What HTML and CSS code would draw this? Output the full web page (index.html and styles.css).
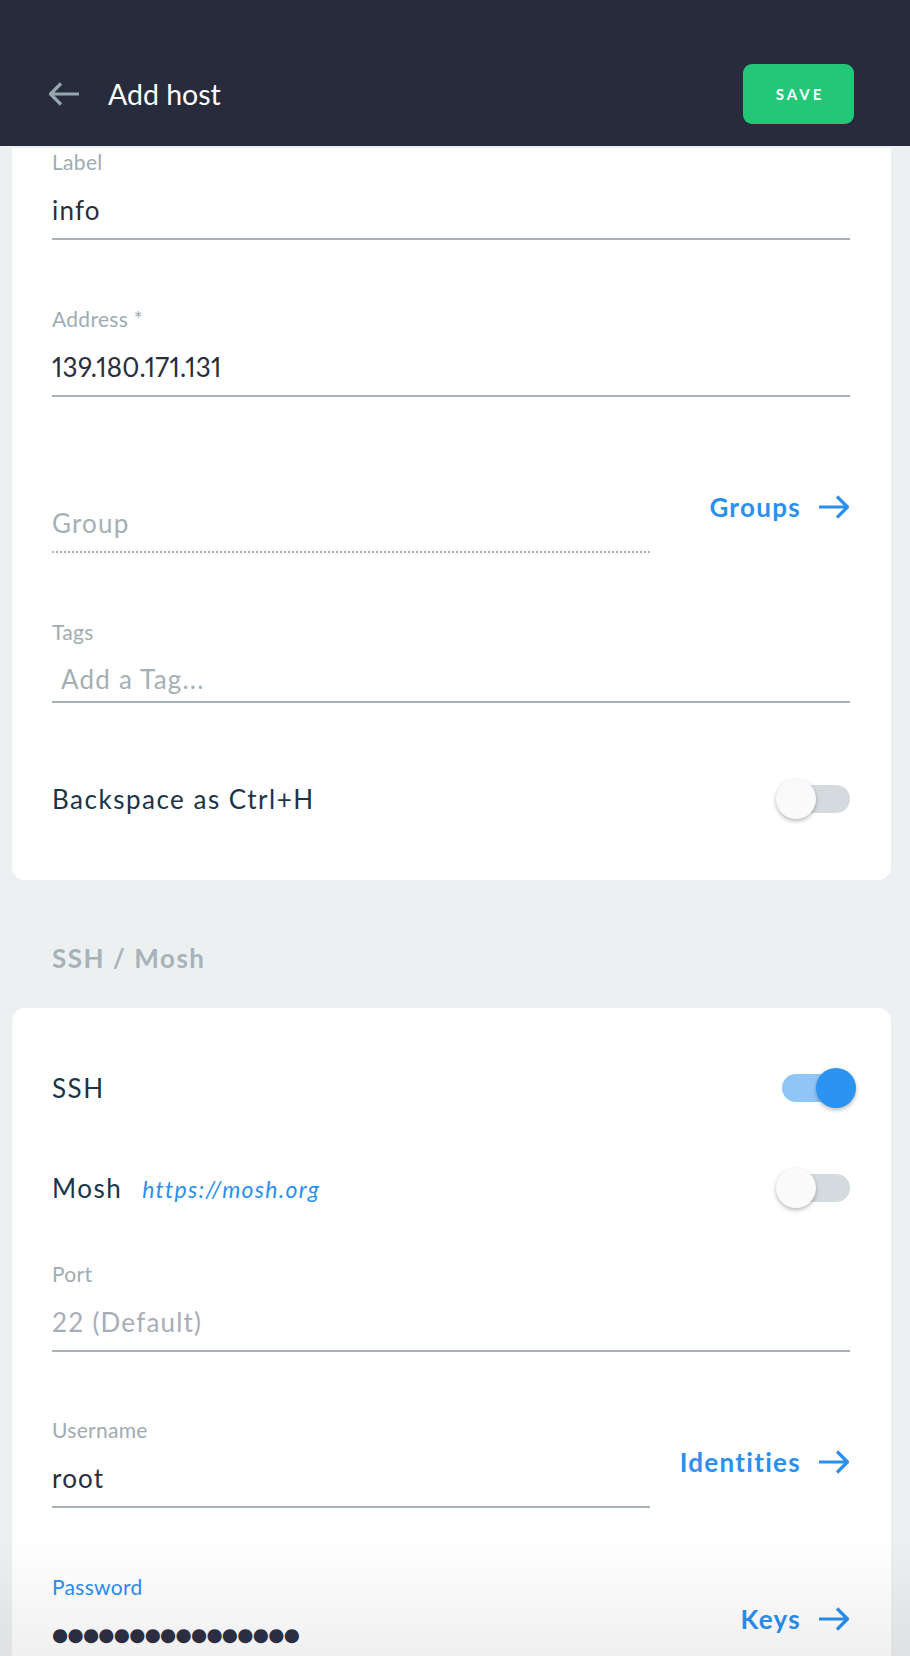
FILE: index.html
```html
<!DOCTYPE html>
<html lang="en">
<head>
<meta charset="utf-8">
<title>Add host</title>
<link rel="stylesheet" href="styles.css">
</head>
<body>
<header class="topbar">
  <button class="back" type="button" aria-label="Back">
    <svg viewBox="0 0 32 24" width="32" height="24"><path d="M31 12H2.5M13 1.5L2.5 12L13 22.5" fill="none" stroke="currentColor" stroke-width="3.2" stroke-linejoin="round"/></svg>
  </button>
  <h1 class="title">Add host</h1>
  <button class="save" type="button">SAVE</button>
</header>

<main class="content">
  <section class="card card--general">
    <div class="field">
      <div class="field__label">Label</div>
      <div class="field__value">info</div>
    </div>
    <div class="field">
      <div class="field__label">Address *</div>
      <div class="field__value field__value--numeric">139.180.171.131</div>
    </div>
    <div class="field-row">
      <div class="field field--dotted field--narrow">
        <div class="field__label"></div>
        <div class="field__value field__value--placeholder">Group</div>
      </div>
      <a class="link" href="#">Groups <svg class="arrow" viewBox="0 0 32 24" width="32" height="24"><path d="M1 12H29.5M19 1.5L29.5 12L19 22.5" fill="none" stroke="currentColor" stroke-width="3.2" stroke-linejoin="round"/></svg></a>
    </div>
    <div class="field field--tags">
      <div class="field__label">Tags</div>
      <div class="field__value field__value--placeholder field__value--tag">Add a Tag...</div>
    </div>
    <div class="switch-row switch-row--last">
      <span class="switch-row__text">Backspace as Ctrl+H</span>
      <span class="switch"><span class="switch__knob"></span></span>
    </div>
  </section>

  <h2 class="section-title">SSH / Mosh</h2>

  <section class="card card--ssh">
    <div class="switch-row">
      <span class="switch-row__text">SSH</span>
      <span class="switch switch--on"><span class="switch__knob"></span></span>
    </div>
    <div class="switch-row">
      <span class="switch-row__text">Mosh <a class="mosh-link" href="#">https://mosh.org</a></span>
      <span class="switch"><span class="switch__knob"></span></span>
    </div>
    <div class="field field--first">
      <div class="field__label">Port</div>
      <div class="field__value field__value--muted">22 (Default)</div>
    </div>
    <div class="field-row">
      <div class="field field--narrow">
        <div class="field__label">Username</div>
        <div class="field__value">root</div>
      </div>
      <a class="link" href="#">Identities <svg class="arrow" viewBox="0 0 32 24" width="32" height="24"><path d="M1 12H29.5M19 1.5L29.5 12L19 22.5" fill="none" stroke="currentColor" stroke-width="3.2" stroke-linejoin="round"/></svg></a>
    </div>
    <div class="field-row">
      <div class="field field--narrow field--focus">
        <div class="field__label field__label--focus">Password</div>
        <div class="field__value field__value--dots">●●●●●●●●●●●●●●●●</div>
      </div>
      <a class="link" href="#">Keys <svg class="arrow" viewBox="0 0 32 24" width="32" height="24"><path d="M1 12H29.5M19 1.5L29.5 12L19 22.5" fill="none" stroke="currentColor" stroke-width="3.2" stroke-linejoin="round"/></svg></a>
    </div>
  </section>
</main>
<div class="fade"></div>
</body>
</html>
```
FILE: styles.css
```css
* { box-sizing: border-box; }

html, body {
  margin: 0;
  padding: 0;
}

body {
  width: 910px;
  background: #edf0f1;
  font-family: "Lato", "Liberation Sans", sans-serif;
  color: #2a2d3e;
  overflow: hidden;
}

/* Header */
.topbar {
  height: 146px;
  background: #282b3c;
  display: flex;
  align-items: center;
  padding: 64px 56px 22px 48px;
}

.back {
  border: 0;
  background: none;
  padding: 0;
  width: 32px;
  height: 24px;
  color: #98a6ae;
  display: flex;
}

.title {
  margin: 0 0 0 28px;
  font-size: 28.5px;
  font-weight: 400;
  color: #ffffff;
  line-height: 34px;
}

.save {
  margin-left: auto;
  width: 111px;
  height: 60px;
  border: 0;
  border-radius: 9px;
  background: #22c777;
  color: #ffffff;
  font-family: "Lato", "Liberation Sans", sans-serif;
  font-weight: 700;
  font-size: 15px;
  letter-spacing: 3px;
  padding: 0 0 0 3px;
}

/* Content */
.content {
  padding-top: 2px;
}

.card {
  background: #ffffff;
  margin: 0 19px 0 12px;
  padding: 0 41px 0 40px;
}

.card--general {
  padding-top: 4px;
  padding-bottom: 31px;
  border-radius: 0 0 13px 13px;
}

.card--ssh {
  padding-top: 30px;
  padding-bottom: 60px;
  border-radius: 13px 13px 0 0;
}

.section-title {
  margin: 63px 0 35px 52px;
  font-size: 26px;
  line-height: 30px;
  font-weight: 700;
  letter-spacing: 1.5px;
  color: #a7b2b9;
}

/* Fields */
.field {
  display: flex;
  flex-direction: column;
  border-bottom: 2px solid #a6b1b8;
}

.field + .field,
.field + .field-row,
.field-row + .field,
.field-row + .field-row {
  margin-top: 68.5px;
}

.field__label {
  height: 20px;
  font-size: 21px;
  line-height: 20px;
  letter-spacing: 0.3px;
  color: #a0abb2;
}

.field__label--focus {
  color: #2b8ff0;
}

.field__value {
  margin-top: 23px;
  padding-bottom: 13px;
  font-size: 26px;
  line-height: 30px;
  letter-spacing: 1.2px;
  color: #2a2d3e;
  white-space: nowrap;
}

.field__value--numeric {
  font-variant-numeric: proportional-nums;
  letter-spacing: 0.3px;
}

.field__value--placeholder {
  color: #a5b0b6;
}

.field__value--muted {
  color: #a9adb9;
}

.field--dotted {
  border-bottom: 2px dotted #a6b1b8;
}

.field--narrow {
  width: 598px;
}

.field-row {
  display: flex;
  align-items: center;
  justify-content: space-between;
}

.field--tags .field__value {
  margin-top: 22.5px;
  padding-bottom: 7px;
}

.field__value--tag {
  padding-left: 9px;
}

.field--first {
  margin-top: 25.5px;
}

.field__value--dots {
  font-family: "DejaVu Sans", sans-serif;
  font-size: 18.5px;
  letter-spacing: -0.7px;
  color: #2e3145;
}

/* Links */
.link {
  display: flex;
  align-items: center;
  gap: 17px;
  margin-bottom: 4px;
  color: #2b8ff0;
  font-weight: 700;
  font-size: 26px;
  line-height: 30px;
  letter-spacing: 1.3px;
  text-decoration: none;
}

.arrow {
  display: block;
  flex: none;
}

/* Switch rows */
.switch-row {
  height: 100px;
  display: flex;
  align-items: center;
  justify-content: space-between;
}

.switch-row--last {
  margin-top: 46px;
}

.switch-row__text {
  font-size: 26px;
  line-height: 30px;
  letter-spacing: 1.5px;
  color: #1a3448;
  display: flex;
  align-items: baseline;
}

.mosh-link {
  margin-left: 20px;
  font-size: 23px;
  font-style: italic;
  letter-spacing: 1.3px;
  color: #2b8ff0;
  text-decoration: none;
}

.switch {
  position: relative;
  width: 68px;
  height: 28px;
  border-radius: 14px;
  background: #d4dbde;
  flex: none;
}

.switch__knob {
  position: absolute;
  top: -6px;
  left: -6px;
  width: 40px;
  height: 40px;
  border-radius: 50%;
  background: #fafafa;
  box-shadow: 0 2px 4px rgba(0, 0, 0, 0.28);
}

.switch--on {
  background: #90c6f7;
}

.switch--on .switch__knob {
  left: auto;
  right: -6px;
  background: #2b93f1;
}

/* Bottom fade */
.fade {
  position: fixed;
  left: 0;
  right: 0;
  bottom: 0;
  height: 120px;
  background: linear-gradient(rgba(0, 0, 0, 0), rgba(0, 0, 0, 0.06));
  pointer-events: none;
}
```
